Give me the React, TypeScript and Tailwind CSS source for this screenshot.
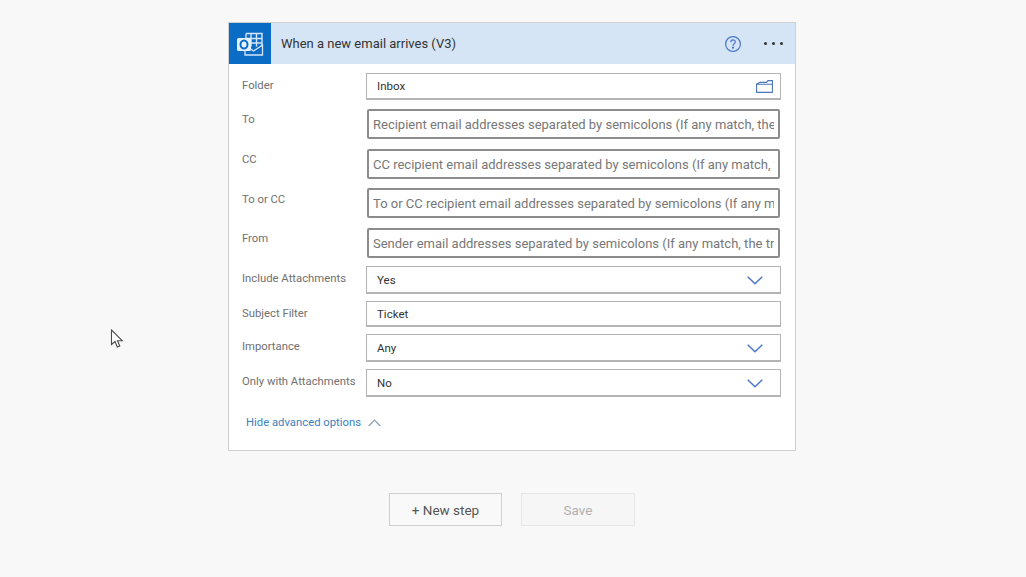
const font = 'font-["Roboto","Noto_Sans",sans-serif]';

function OutlookIcon() {
   return (
      <svg width="28" height="28" viewBox="0 0 28 28" fill="none">
         <path d="M10 3.500h16v13" stroke="#d4e6f7" strokeWidth="1.400" />
         <path d="M10 3.500v5M15 3.500v13M20.500 3.500v13M10 8.500h16M10 13h16" stroke="#d4e6f7" strokeWidth="1.400" />
         <path d="M9 17v8h17.500V15L17.500 21 14 18.500" stroke="#d4e6f7" strokeWidth="1.300" />
         <rect x="1" y="8" width="14" height="13" rx="1.500" fill="#e6f1fb" />
         <ellipse cx="8" cy="14.500" rx="3.500" ry="4" stroke="#0a6cc4" strokeWidth="2" />
      </svg>
   );
}

function FolderIcon() {
   return (
      <svg width="17" height="13" viewBox="0 0 17 13" fill="none" stroke="#4a78b8" strokeWidth="1.100">
         <path d="M.6 4.200h15.800v8.200H.6z" />
         <path d="M.6 4.200 4 2.400h6.500l1.500-1.800h4.400v3.600" />
      </svg>
   );
}

function SelectChevron() {
   return (
      <svg width="16" height="9" viewBox="0 0 16 9" fill="none" stroke="#4a78c8" strokeWidth="1.500">
         <path d="M.7.8 8 7.800 15.300.8" />
      </svg>
   );
}

function Cursor() {
   return (
      <svg className="absolute left-[110px] top-[329px]" width="14" height="20" viewBox="0 0 14 20" fill="#fff" stroke="#4a4a4a" strokeWidth="1.100">
         <path d="M1.500 1v14.500l3.500-3 2.300 5.500 2.500-1-2.300-5.300h4.700z" />
      </svg>
   );
}

type RowProps = {
   label: string;
   value?: string;
   placeholder?: string;
   select?: boolean;
   folder?: boolean;
   rowClass: string;
   labelClass?: string;
};

function Row({ label, value, placeholder, select, folder, rowClass, labelClass }: RowProps) {
   return (
      <div className={`flex ${rowClass}`}>
         <div className={`w-[124px] shrink-0 text-[11.300px] leading-[16px] text-[#707070] ${labelClass ?? ''}`}>
            {label}
         </div>
         {placeholder ? (
            <div className="mx-[1px] flex flex-1 items-center overflow-hidden rounded-[2px] border-2 border-[#8c8c8c] bg-white px-[4px]">
               <span className="overflow-hidden whitespace-nowrap pt-[2px] text-[13px] text-[#777]">{placeholder}</span>
            </div>
         ) : (
            <div className="flex flex-1 items-center justify-between border border-b-2 border-[#b4b4b4] bg-white pl-[10px] pr-[7px]">
               <span className="pt-[2px] text-[11.500px] text-[#333]">{value}</span>
               {select && (
                  <span className="mr-[10px] pt-[2px]">
                     <SelectChevron />
                  </span>
               )}
               {folder && <FolderIcon />}
            </div>
         )}
      </div>
   );
}

export default function App() {
   return (
      <div className={`relative flex h-[577px] w-[1026px] flex-col items-start overflow-hidden bg-[#f8f8f8] ${font}`}>
         <Cursor />
         <div className="ml-[228px] mt-[22px] flex h-[429px] w-[568px] flex-col border border-[#d0d0d0] bg-white">
            <div className="flex h-[41px] shrink-0 items-center bg-[#d5e5f6]">
               <div className="flex h-[41px] w-[42px] items-center justify-center bg-[#0a6cc4]">
                  <OutlookIcon />
               </div>
               <span className="ml-[10px] text-[13px] text-[#333]">When a new email arrives (V3)</span>
               <svg className="ml-auto" width="18" height="18" viewBox="0 0 18 18" fill="none" stroke="#4a78c8" strokeWidth="1.200">
                  <circle cx="9" cy="9" r="7.400" />
                  <path d="M6.800 7.200c0-3 4.500-3 4.500-.2 0 1.800-2.300 1.800-2.300 3.700" />
                  <circle cx="9" cy="12.700" r=".5" fill="#4a78c8" />
               </svg>
               <div className="ml-[22px] mr-[12px] flex gap-[5px]">
                  <span className="h-[3px] w-[3px] rounded-full bg-[#333]" />
                  <span className="h-[3px] w-[3px] rounded-full bg-[#333]" />
                  <span className="h-[3px] w-[3px] rounded-full bg-[#333]" />
               </div>
            </div>
            <div className="flex flex-col pl-[13px] pr-[14px]">
               <Row rowClass="mt-[9px] h-[27px]" labelClass="mt-[5px]" label="Folder" value="Inbox" folder />
               <Row rowClass="mt-[9px] h-[30px]" labelClass="mt-[3px]" label="To" placeholder="Recipient email addresses separated by semicolons (If any match, the trigger will run)" />
               <Row rowClass="mt-[10px] h-[30px]" labelClass="mt-[3px]" label="CC" placeholder="CC recipient email addresses separated by semicolons (If any match, the trigger will run)" />
               <Row rowClass="mt-[9px] h-[30px]" labelClass="mt-[4px]" label="To or CC" placeholder="To or CC recipient email addresses separated by semicolons (If any match, the trigger will run)" />
               <Row rowClass="mt-[10px] h-[30px]" labelClass="mt-[3px]" label="From" placeholder="Sender email addresses separated by semicolons (If any match, the trigger will run)" />
               <Row rowClass="mt-[8px] h-[28px]" labelClass="mt-[5px]" label="Include Attachments" value="Yes" select />
               <Row rowClass="mt-[7px] h-[26px]" labelClass="mt-[5px]" label="Subject Filter" value="Ticket" />
               <Row rowClass="mt-[7px] h-[28px]" labelClass="mt-[5px]" label="Importance" value="Any" select />
               <Row rowClass="mt-[7px] h-[28px]" labelClass="mt-[5px]" label="Only with Attachments" value="No" select />
               <div className="ml-[4px] mt-[18px] flex items-center gap-[7px] text-[11.300px] leading-[16px] text-[#3a7fc1]">
                  Hide advanced options
                  <svg width="13" height="8" viewBox="0 0 13 8" fill="none" stroke="#8a9fb5" strokeWidth="1.200">
                     <path d="M.7 7 6.500 1.200 12.300 7" />
                  </svg>
               </div>
            </div>
         </div>
         <div className="ml-[389px] mt-[42px] flex gap-[19px]">
            <div className="flex h-[33px] w-[113px] items-center justify-center border border-[#cfcfcf] bg-[#f9f9f9] pt-[1px] text-[13.500px] text-[#555]">
               + New step
            </div>
            <div className="flex h-[33px] w-[114px] items-center justify-center border border-[#e6e6e6] bg-[#f6f6f6] pt-[1px] text-[13.500px] text-[#b0b0b0]">
               Save
            </div>
         </div>
      </div>
   );
}
